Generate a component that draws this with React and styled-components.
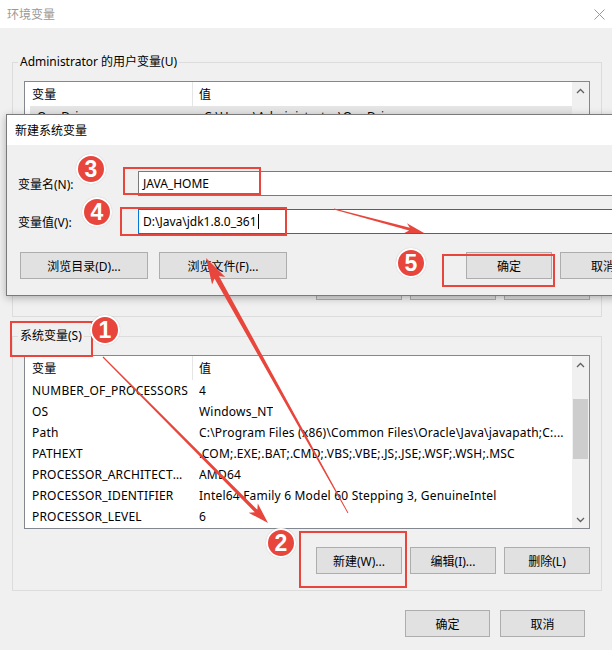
import React from "react";
import styled, { createGlobalStyle } from "styled-components";

const GlobalStyle = createGlobalStyle`
  html, body {
    margin: 0;
    padding: 0;
    background: #f0f0f0;
  }
  body {
    font-family: "Noto Sans", "Noto Sans CJK SC", sans-serif;
    font-size: 12px;
    color: #000;
  }
`;

const Screen = styled.div`
  position: relative;
  width: 612px;
  height: 650px;
  overflow: hidden;
  background: #f0f0f0;
`;

const TitleBar = styled.div`
  height: ${(p) => p.$h}px;
  background: #fff;
  display: flex;
  align-items: center;
  justify-content: space-between;
  padding: 0 7px 0 ${(p) => p.$pl}px;
  box-sizing: border-box;
  color: ${(p) => (p.$dim ? "#999" : "#000")};
  font-size: 12px;
`;

const MainBody = styled.div`
  padding: 0 10px 0 12px;
`;

const Group = styled.fieldset`
  margin: ${(p) => p.$mt}px 0 0 0;
  padding: 0;
  border: 1px solid #dcdcdc;
  min-width: 0;
`;

const GroupLabel = styled.legend`
  margin-left: 5px;
  padding: 0 2px;
  font-size: 12px;
  line-height: 16px;
`;

const GroupInner = styled.div`
  padding: 11px 11px 16px 11px;
`;

const ListBox = styled.div`
  height: 174px;
  box-sizing: border-box;
  border: 1px solid #828790;
  background: #fff;
  display: flex;
`;

const Table = styled.div`
  flex: 1;
  overflow: hidden;
`;

const HeaderRow = styled.div`
  height: 24px;
  display: flex;
`;

const Row = styled.div`
  height: 21px;
  display: flex;
  background: ${(p) => (p.$selected ? "#e5e5e5" : "transparent")};
  margin-left: ${(p) => (p.$selected ? 5 : 0)}px;
`;

const Cell = styled.div`
  display: flex;
  align-items: center;
  box-sizing: border-box;
  white-space: nowrap;
  overflow: hidden;
  line-height: 21px;
  letter-spacing: 0.2px;
  padding-left: ${(p) => (p.$first ? 7 : 6)}px;
  padding-right: ${(p) => (p.$first ? 2 : 3)}px;
  width: ${(p) => (p.$first ? "168px" : "auto")};
  flex: ${(p) => (p.$first ? "none" : 1)};
  min-width: 0;
  border-right: ${(p) => (p.$head ? "1px solid #e5e5e5" : "none")};
`;

const CellText = styled.span`
  overflow: hidden;
  text-overflow: ellipsis;
  white-space: nowrap;
`;

const ScrollBar = styled.div`
  width: 17px;
  background: #f0f0f0;
  display: flex;
  flex-direction: column;
`;

const ScrollArrow = styled.div`
  height: 17px;
  display: flex;
  align-items: center;
  justify-content: center;
`;

const Track = styled.div`
  flex: 1;
  padding-top: 26px;
`;

const Thumb = styled.div`
  height: 60px;
  margin: 0 1px;
  background: #cdcdcd;
`;

const ButtonRow = styled.div`
  display: flex;
  justify-content: flex-end;
  gap: ${(p) => p.$gap}px;
  margin-top: ${(p) => p.$mt}px;
  padding-right: ${(p) => p.$pr || 0}px;
`;

const Button = styled.div`
  width: ${(p) => p.$w || 86}px;
  height: 27px;
  box-sizing: border-box;
  background: #e1e1e1;
  border: 1px solid #adadad;
  display: flex;
  align-items: center;
  justify-content: center;
  font-size: 12px;
`;

const Dialog = styled.div`
  position: absolute;
  left: 6px;
  top: 114px;
  width: 652px;
  box-sizing: border-box;
  border: 1px solid #7a7a7a;
  background: #f0f0f0;
  box-shadow: 0 2px 8px rgba(0, 0, 0, 0.28);
`;

const DialogBody = styled.div`
  padding: 26px 11px 16px 11px;
`;

const Form = styled.div`
  display: grid;
  grid-template-columns: 120px 1fr;
  row-gap: 13px;
  align-items: center;
`;

const FieldLabel = styled.div`
  font-size: 12px;
`;

const Field = styled.div`
  height: 25px;
  box-sizing: border-box;
  background: #fff;
  border: 1px solid ${(p) => (p.$focused ? "#0078d7" : "#7a7a7a")};
  padding-left: 4px;
  display: flex;
  align-items: center;
  font-size: 12px;
`;

const Caret = styled.span`
  display: inline-block;
  width: 1px;
  height: 15px;
  background: #000;
  margin-left: 1px;
`;

const DialogButtons = styled.div`
  display: flex;
  justify-content: space-between;
  margin-top: 18px;
`;

const ButtonGroup = styled.div`
  display: flex;
  gap: ${(p) => p.$gap}px;
  padding-left: ${(p) => p.$pl || 0}px;
`;

const RedBox = styled.div`
  position: absolute;
  left: ${(p) => p.$x}px;
  top: ${(p) => p.$y}px;
  width: ${(p) => p.$w}px;
  height: ${(p) => p.$h}px;
  box-sizing: border-box;
  border: 2px solid #e8453c;
  pointer-events: none;
`;

const Badge = styled.div`
  position: absolute;
  left: ${(p) => p.$cx - 15}px;
  top: ${(p) => p.$cy - 15}px;
  width: 30px;
  height: 30px;
  box-sizing: border-box;
  border-radius: 50%;
  background: #e8453c;
  border: 2px solid #fff;
  box-shadow: 0 0 1px rgba(0, 0, 0, 0.25);
  color: #fff;
  font-family: "Liberation Sans", Arial, sans-serif;
  font-weight: bold;
  font-size: 23px;
  line-height: 1;
  display: flex;
  align-items: center;
  justify-content: center;
`;

const Overlay = styled.svg`
  position: absolute;
  left: 0;
  top: 0;
  pointer-events: none;
`;

const Chevron = ({ down }) => (
  <svg width="9" height="6" viewBox="0 0 9 6">
    <polyline
      points={down ? "1,1 4.5,4.5 8,1" : "1,5 4.5,1.5 8,5"}
      fill="none"
      stroke="#606060"
      strokeWidth="1.3"
    />
  </svg>
);

const CloseIcon = () => (
  <svg width="11" height="11" viewBox="0 0 11 11">
    <path d="M0.5 0.5 L10.5 10.5 M10.5 0.5 L0.5 10.5" stroke="#999" strokeWidth="1" />
  </svg>
);

// tapered arrow: thin at the start, thicker near the head
function arrowPoints([x1, y1], [x2, y2], w0, w1, L, H) {
  const dx = x2 - x1;
  const dy = y2 - y1;
  const len = Math.hypot(dx, dy);
  const ux = dx / len;
  const uy = dy / len;
  const nx = -uy;
  const ny = ux;
  const bx = x2 - ux * L;
  const by = y2 - uy * L;
  const pts = [
    [x1 + (nx * w0) / 2, y1 + (ny * w0) / 2],
    [bx + (nx * w1) / 2, by + (ny * w1) / 2],
    [bx - ux * 4 + (nx * H) / 2, by - uy * 4 + (ny * H) / 2],
    [x2, y2],
    [bx - ux * 4 - (nx * H) / 2, by - uy * 4 - (ny * H) / 2],
    [bx - (nx * w1) / 2, by - (ny * w1) / 2],
    [x1 - (nx * w0) / 2, y1 - (ny * w0) / 2],
  ];
  return pts.map((p) => p[0].toFixed(1) + "," + p[1].toFixed(1)).join(" ");
}

const arrows = [
  { from: [103, 357], to: [268, 523], w0: 1, w1: 3.5, L: 17, H: 13 },
  { from: [348, 513], to: [206, 258], w0: 1, w1: 5, L: 22, H: 15 },
  { from: [334, 209], to: [424, 233], w0: 1, w1: 3, L: 15, H: 10 },
];

const userRows = [["OneDrive", "C:\\Users\\Administrator\\OneDrive", true]];

const systemRows = [
  ["NUMBER_OF_PROCESSORS", "4"],
  ["OS", "Windows_NT"],
  ["Path", "C:\\Program Files (x86)\\Common Files\\Oracle\\Java\\javapath;C:..."],
  ["PATHEXT", ".COM;.EXE;.BAT;.CMD;.VBS;.VBE;.JS;.JSE;.WSF;.WSH;.MSC"],
  ["PROCESSOR_ARCHITECTURE", "AMD64"],
  ["PROCESSOR_IDENTIFIER", "Intel64 Family 6 Model 60 Stepping 3, GenuineIntel"],
  ["PROCESSOR_LEVEL", "6"],
];

const VarList = ({ rows }) => (
  <ListBox>
    <Table>
      <HeaderRow>
        <Cell $first $head>变量</Cell>
        <Cell>值</Cell>
      </HeaderRow>
      {rows.map(([name, value, selected]) => (
        <Row key={name} $selected={selected}>
          <Cell $first>
            <CellText>{name}</CellText>
          </Cell>
          <Cell>
            <CellText>{value}</CellText>
          </Cell>
        </Row>
      ))}
    </Table>
    <ScrollBar>
      <ScrollArrow>
        <Chevron />
      </ScrollArrow>
      <Track>
        <Thumb />
      </Track>
      <ScrollArrow>
        <Chevron down />
      </ScrollArrow>
    </ScrollBar>
  </ListBox>
);

const GroupButtons = () => (
  <ButtonRow $gap={8} $mt={18}>
    <Button>新建(W)...</Button>
    <Button>编辑(I)...</Button>
    <Button>删除(L)</Button>
  </ButtonRow>
);

export default function App() {
  return (
    <Screen>
      <GlobalStyle />
      <TitleBar $h={28} $pl={7} $dim>
        <span>环境变量</span>
        <CloseIcon />
      </TitleBar>
      <MainBody>
        <Group $mt={26}>
          <GroupLabel>Administrator 的用户变量(U)</GroupLabel>
          <GroupInner>
            <VarList rows={userRows} />
            <GroupButtons />
          </GroupInner>
        </Group>
        <Group $mt={11}>
          <GroupLabel>系统变量(S)</GroupLabel>
          <GroupInner>
            <VarList rows={systemRows} />
            <GroupButtons />
          </GroupInner>
        </Group>
        <ButtonRow $gap={10} $mt={19} $pr={17}>
          <Button $w={85}>确定</Button>
          <Button $w={85}>取消</Button>
        </ButtonRow>
      </MainBody>

      <Dialog>
        <TitleBar $h={30} $pl={8}>
          <span>新建系统变量</span>
        </TitleBar>
        <DialogBody>
          <Form>
            <FieldLabel>变量名(N):</FieldLabel>
            <Field>JAVA_HOME</Field>
            <FieldLabel>变量值(V):</FieldLabel>
            <Field $focused>
              D:\Java\jdk1.8.0_361
              <Caret />
            </Field>
          </Form>
          <DialogButtons>
            <ButtonGroup $gap={11} $pl={2}>
              <Button $w={128}>浏览目录(D)...</Button>
              <Button $w={128}>浏览文件(F)...</Button>
            </ButtonGroup>
            <ButtonGroup $gap={8}>
              <Button>确定</Button>
              <Button>取消</Button>
            </ButtonGroup>
          </DialogButtons>
        </DialogBody>
      </Dialog>

      <RedBox $x={123} $y={167} $w={138} $h={28} />
      <RedBox $x={120} $y={207} $w={167} $h={29} />
      <RedBox $x={442} $y={254} $w={113} $h={33} />
      <RedBox $x={10} $y={321} $w={83} $h={36} />
      <RedBox $x={299} $y={531} $w={108} $h={57} />

      <Overlay width="612" height="650" viewBox="0 0 612 650">
        {arrows.map((a, i) => (
          <polygon
            key={i}
            points={arrowPoints(a.from, a.to, a.w0, a.w1, a.L, a.H)}
            fill="#e8453c"
          />
        ))}
      </Overlay>

      <Badge $cx={91} $cy={169}>3</Badge>
      <Badge $cx={97} $cy={212}>4</Badge>
      <Badge $cx={411} $cy={263}>5</Badge>
      <Badge $cx={105} $cy={330}>1</Badge>
      <Badge $cx={281} $cy={543}>2</Badge>
    </Screen>
  );
}
